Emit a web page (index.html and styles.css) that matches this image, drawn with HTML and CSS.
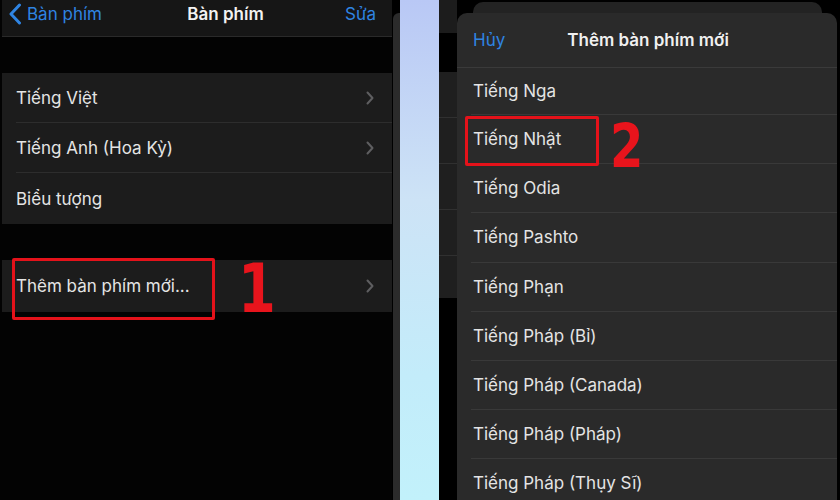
FILE: index.html
```html
<!DOCTYPE html>
<html lang="vi">
<head>
<meta charset="utf-8">
<title>Thêm bàn phím mới</title>
<link rel="stylesheet" href="styles.css">
</head>
<body>
<div class="screen">
  <section class="left">
    <header class="nav">
      <a class="back"><svg class="back-ico" viewBox="0 0 14 22" width="14" height="22"><path d="M11.5 2 L3 11 L11.5 20" fill="none" stroke="currentColor" stroke-width="3" stroke-linecap="round" stroke-linejoin="round"/></svg><span>Bàn phím</span></a>
      <h1 class="nav-title">Bàn phím</h1>
      <a class="edit">Sửa</a>
    </header>
    <ul class="group g1">
      <li class="row"><span>Tiếng Việt</span><svg class="chev" viewBox="0 0 8 14" width="8" height="14"><path d="M1.5 1.5 L6.5 7 L1.5 12.5" fill="none" stroke="currentColor" stroke-width="2" stroke-linecap="round" stroke-linejoin="round"/></svg></li>
      <li class="row"><span>Tiếng Anh (Hoa Kỳ)</span><svg class="chev" viewBox="0 0 8 14" width="8" height="14"><path d="M1.5 1.5 L6.5 7 L1.5 12.5" fill="none" stroke="currentColor" stroke-width="2" stroke-linecap="round" stroke-linejoin="round"/></svg></li>
      <li class="row"><span>Biểu tượng</span></li>
    </ul>
    <ul class="group g2">
      <li class="row mark"><span>Thêm bàn phím mới...</span><svg class="chev" viewBox="0 0 8 14" width="8" height="14"><path d="M1.5 1.5 L6.5 7 L1.5 12.5" fill="none" stroke="currentColor" stroke-width="2" stroke-linecap="round" stroke-linejoin="round"/></svg>
        <span class="box box1"></span><span class="num num1">1</span>
      </li>
    </ul>
  </section>
  <div class="edge"><div class="edge-card"></div></div>
  <div class="wall"></div>
  <div class="under">
    <div class="u-nav"></div>
    <div class="u-gap"></div>
    <div class="u-list">
      <div class="u-row"></div><div class="u-row"></div><div class="u-row"></div><div class="u-row"></div><div class="u-row last"></div>
    </div>
  </div>
  <section class="right">
    <div class="back-sheet"></div>
    <div class="sheet">
      <header class="sheet-head">
        <a class="cancel">Hủy</a>
        <h2 class="sheet-title">Thêm bàn phím mới</h2>
      </header>
      <ul class="list">
        <li class="item first">Tiếng Nga</li>
        <li class="item mark">Tiếng Nhật<span class="box box2"></span><span class="num num2">2</span></li>
        <li class="item">Tiếng Odia</li>
        <li class="item">Tiếng Pashto</li>
        <li class="item">Tiếng Phạn</li>
        <li class="item">Tiếng Pháp (Bỉ)</li>
        <li class="item">Tiếng Pháp (Canada)</li>
        <li class="item">Tiếng Pháp (Pháp)</li>
        <li class="item">Tiếng Pháp (Thụy Sĩ)</li>
      </ul>
    </div>
  </section>
</div>
</body>
</html>
```
FILE: styles.css
```css
* { box-sizing: border-box; }
html, body { margin: 0; padding: 0; }
body {
  background: #000;
  width: 840px;
  height: 500px;
  overflow: hidden;
  font-family: Inter, "Noto Sans", "Liberation Sans", sans-serif;
  color: #e6e6e6;
}
ul { list-style: none; margin: 0; padding: 0; }
h1, h2 { margin: 0; font-weight: 600; }

.screen {
  display: flex;
  height: 500px;
}

/* left settings screen */
.left {
  width: 392px;
  flex: none;
  padding-left: 2px;
  background: #030303;
}
.nav {
  height: 37px;
  background: #161616;
  border-bottom: 1px solid #2a2a2a;
  display: flex;
  align-items: center;
  justify-content: space-between;
  padding: 0 16px 8px 6px;
  font-size: 17px;
}
.back {
  color: #2f84e2;
  display: flex;
  align-items: center;
  gap: 5px;
}
.back-ico { display: block; }
.nav-title {
  font-size: 17px;
  color: #f2f2f2;
  margin-left: 4px;
}
.edit { color: #2f84e2; }

.group {
  background: #1c1c1c;
  padding-left: 14px;
}
.g1 { margin-top: 36px; }
.g2 { margin-top: 36px; }
.row {
  position: relative;
  height: 50px;
  display: flex;
  align-items: center;
  justify-content: space-between;
  padding-right: 18px;
  font-size: 17px;
  color: #e4e4e4;
  border-bottom: 1px solid #2d2d2d;
}
.g1 .row:last-child { border-bottom: none; height: 51px; }
.g2 .row { border-bottom: none; height: 52px; }
.chev { color: #5e5e60; display: block; }

/* annotations */
.box {
  position: absolute;
  border: 3px solid #e4121a;
  border-radius: 2px;
}
.box1 { left: -4px; top: -2px; width: 203px; height: 62px; }
.num {
  position: absolute;
  color: #e8141c;
  font-family: "DejaVu Sans", sans-serif;
  font-weight: 700;
  line-height: 1;
  transform: scaleX(0.8);
  transform-origin: left top;
}
.num1 { left: 222px; top: -5px; font-size: 68px; }

/* middle strips */
.edge {
  width: 8px;
  flex: none;
  background: #000;
  padding-top: 13px;
  padding-left: 1px;
}
.edge-card {
  height: 100%;
  background: #2b2b2b;
  border-top-left-radius: 6px;
}
.wall {
  width: 39px;
  flex: none;
  background: linear-gradient(180deg, #b9c8f5 0%, #cde3f6 40%, #c3ecfa 75%, #c2f1fb 100%);
}
.under {
  width: 18px;
  flex: none;
  background: #000;
}
.u-nav { height: 33px; background: #1c1c1c; }
.u-gap { height: 39px; }
.u-list { background: #1f1f1f; }
.u-row { height: 46px; border-bottom: 1px solid #303030; }
.u-row.last { border-bottom: none; height: 42px; }

/* right sheet */
.right {
  width: 383px;
  flex: none;
  display: flex;
  flex-direction: column;
  background: #000;
  overflow: hidden;
}
.back-sheet {
  flex: none;
  height: 11px;
  margin: 2px 18px 0 16px;
  background: #232323;
  border-radius: 10px 10px 0 0;
}
.sheet {
  flex: 1 0 auto;
  margin-right: 3px;
  background: #2a2a2a;
  border-radius: 10px 10px 0 0;
}
.sheet-head {
  height: 55px;
  display: flex;
  align-items: center;
  padding: 0 16px 0 16px;
  border-bottom: 1px solid #3a3a3a;
}
.cancel {
  color: #2f84e2;
  font-size: 17px;
}
.sheet-title {
  font-size: 17px;
  color: #f0f0f0;
  margin-left: 62px;
}
.list { padding-left: 14px; }
.item {
  position: relative;
  height: 49.2px;
  display: flex;
  align-items: center;
  padding-left: 2px;
  font-size: 17px;
  color: #e4e4e4;
  border-bottom: 1px solid #393939;
}
.item.first { height: 47px; }
.box2 { left: -6px; top: 1px; width: 134px; height: 50px; }
.num2 { left: 139px; top: 1px; font-size: 60px; }
```
